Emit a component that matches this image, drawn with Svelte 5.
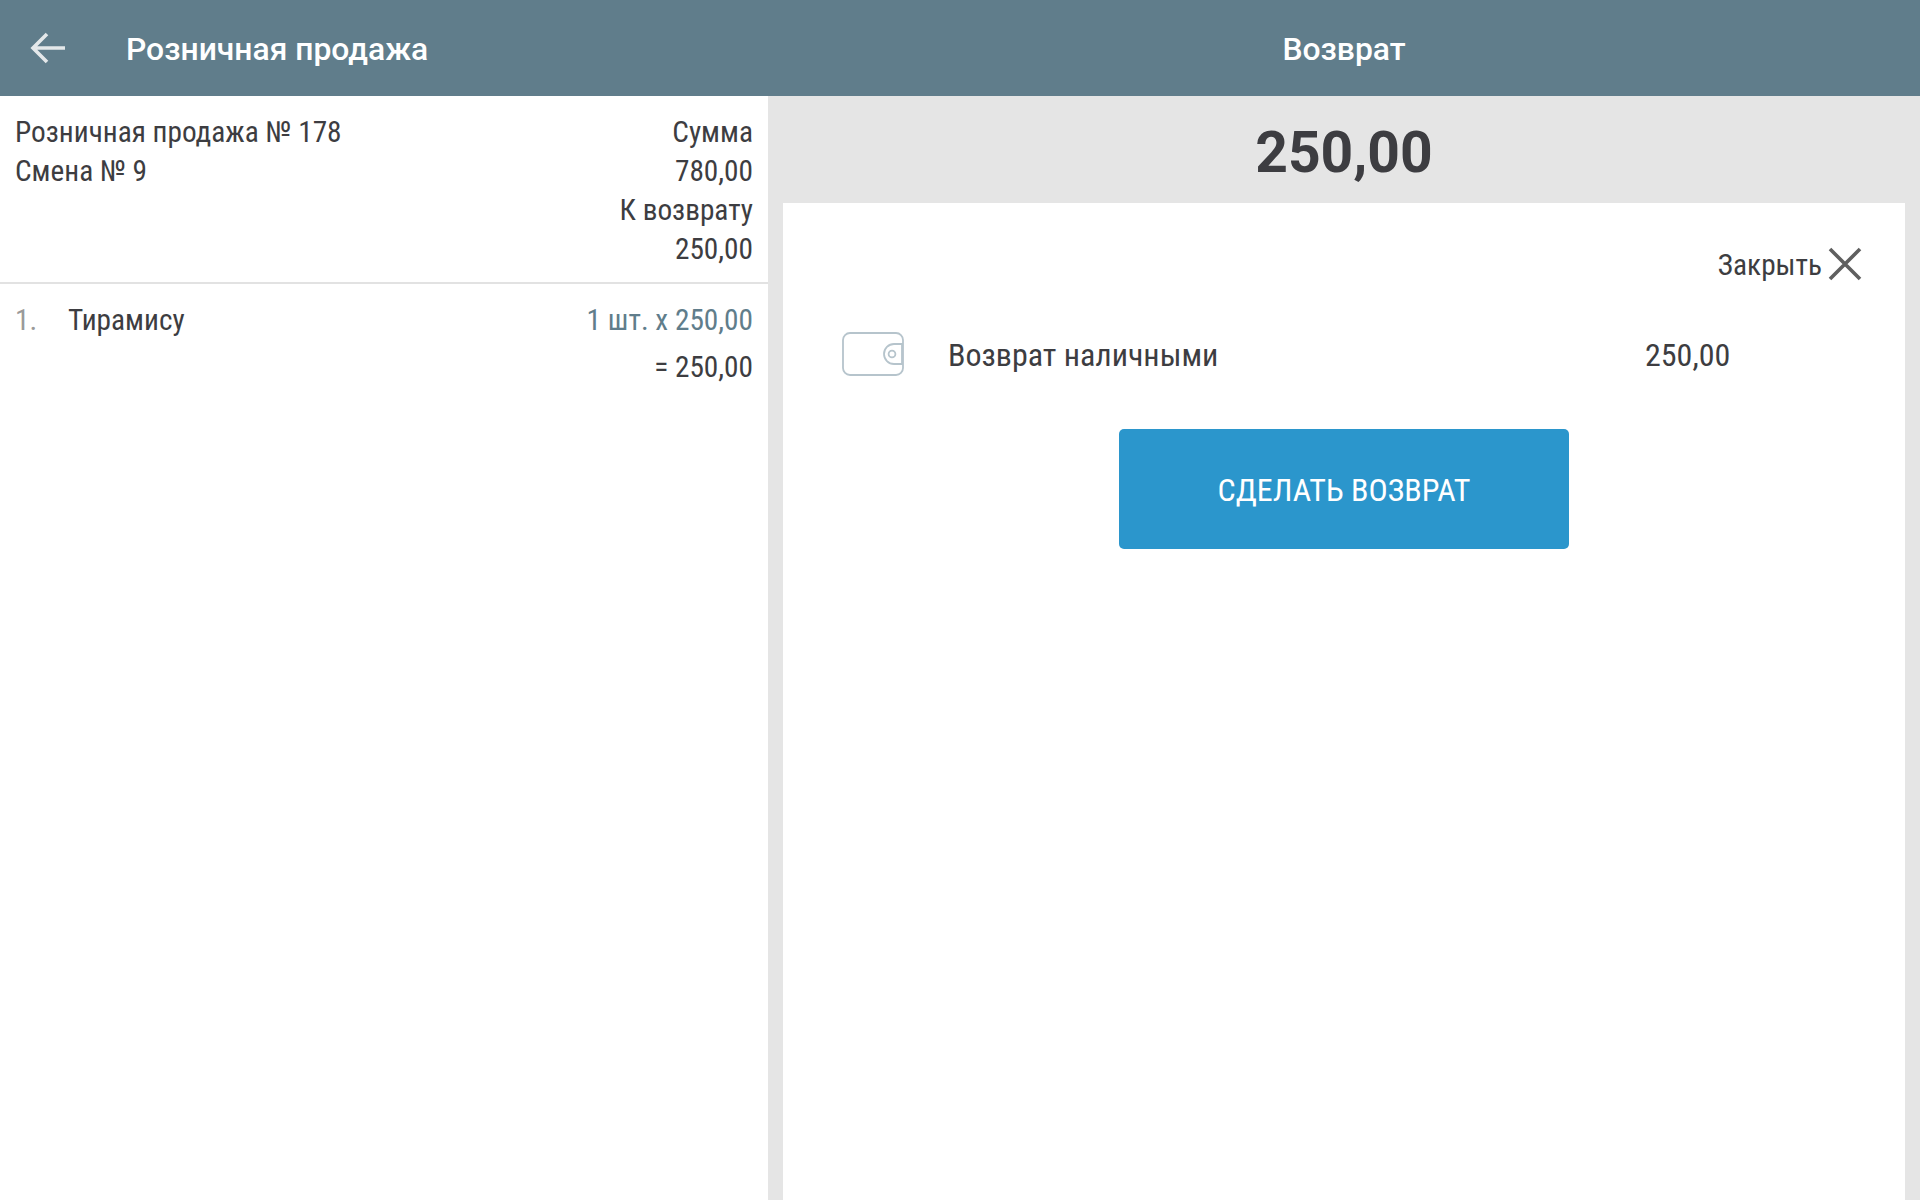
<script>
  const info = ['Сумма', '780,00', 'К возврату', '250,00'];
</script>

<div class="app">
  <header class="bar">
    <div class="bar-left">
      <svg class="back" width="36" height="32" viewBox="0 0 36 32" aria-hidden="true">
        <path d="M35 16H3M17 2 3 16l14 14" fill="none" stroke="#e4e8ea" stroke-width="3.6" />
      </svg>
      <span class="bar-title">Розничная продажа</span>
    </div>
    <div class="bar-right"><span class="bar-title">Возврат</span></div>
  </header>

  <main class="body">
    <section class="left">
      <div class="receipt">
        <div class="receipt-id">
          <div>Розничная продажа № 178</div>
          <div>Смена № 9</div>
        </div>
        <div class="receipt-sum">
          {#each info as line}
            <div>{line}</div>
          {/each}
        </div>
      </div>
      <div class="item">
        <span class="num">1.</span>
        <span class="name">Тирамису</span>
        <div class="prices">
          <div class="qty">1 шт. х 250,00</div>
          <div class="total">= 250,00</div>
        </div>
      </div>
    </section>

    <section class="right">
      <div class="amount">250,00</div>
      <div class="card">
        <div class="close">
          <span class="close-label">Закрыть</span>
          <svg class="close-icon" width="34" height="34" viewBox="0 0 34 34" aria-hidden="true">
            <path d="M2 2 32 32M32 2 2 32" stroke="#5f5f5f" stroke-width="3.6" fill="none" />
          </svg>
        </div>
        <div class="method">
          <svg class="wallet" width="62" height="44" viewBox="0 0 62 44" aria-hidden="true">
            <rect x="1" y="1" width="60" height="42" rx="7" fill="none" stroke="#b6c4cc" stroke-width="1.8" />
            <path d="M60 12H52a10 10 0 0 0 0 20h8z" fill="none" stroke="#b6c4cc" stroke-width="1.8" />
            <circle cx="50" cy="22" r="3.4" fill="none" stroke="#b6c4cc" stroke-width="1.8" />
          </svg>
          <span class="method-name">Возврат наличными</span>
          <span class="method-sum">250,00</span>
        </div>
        <button class="submit">СДЕЛАТЬ ВОЗВРАТ</button>
      </div>
    </section>
  </main>
</div>

<style>
  :global(body) {
    margin: 0;
    background: #fff;
  }
  .app {
    height: 1200px;
    display: flex;
    flex-direction: column;
    font-family: "Roboto Condensed", Roboto, sans-serif;
    font-stretch: 75%;
    font-size: 29.3px;
    line-height: 39px;
    color: #3d3d41;
    overflow: hidden;
  }
  .bar {
    height: 96px;
    flex: none;
    display: flex;
    background: #607d8b;
    color: #fff;
  }
  .bar-left {
    width: 768px;
    display: flex;
    align-items: center;
    padding-left: 30px;
    box-sizing: border-box;
  }
  .back {
    margin-right: 60px;
  }
  .bar-title {
    font-family: Roboto, sans-serif;
    font-stretch: 100%;
    font-weight: 500;
    font-size: 31.85px;
    padding-top: 2px;
  }
  .bar-right {
    flex: 1;
    display: flex;
    align-items: center;
    justify-content: center;
  }
  .body {
    flex: 1;
    display: flex;
    min-height: 0;
  }
  .left {
    width: 768px;
    flex: none;
  }
  .receipt {
    display: flex;
    justify-content: space-between;
    padding: 17px 15px 13px;
    border-bottom: 2px solid #e2e2e2;
  }
  .receipt-sum {
    text-align: right;
  }
  .item {
    display: flex;
    padding: 17px 15px;
  }
  .num {
    width: 53px;
    color: #9a9a9a;
  }
  .name {
    flex: 1;
  }
  .prices {
    text-align: right;
  }
  .qty {
    color: #607d8b;
    margin-bottom: 8px;
  }
  .right {
    flex: 1;
    display: flex;
    flex-direction: column;
    background: #e5e5e5;
  }
  .amount {
    height: 102px;
    padding-top: 5px;
    flex: none;
    display: flex;
    align-items: center;
    justify-content: center;
    font-family: Roboto, sans-serif;
    font-stretch: 100%;
    font-weight: 700;
    font-size: 57px;
  }
  .card {
    flex: 1;
    margin: 0 15px;
    background: #fff;
    display: flex;
    flex-direction: column;
    align-items: center;
  }
  .close {
    align-self: flex-end;
    display: flex;
    align-items: center;
    gap: 6px;
    margin: 41px 43px 0 0;
  }
  .close-label {
    padding-top: 2px;
  }
  .close-icon {
    margin-bottom: 2px;
  }
  .method {
    align-self: stretch;
    display: flex;
    align-items: center;
    margin-top: 47px;
    padding-left: 59px;
    font-size: 32px;
  }
  .wallet {
    margin-bottom: 3px;
  }
  .method-name {
    margin-left: 44px;
    width: 697px;
  }
  .submit {
    width: 450px;
    height: 120px;
    margin-top: 50px;
    padding-top: 3px;
    border: none;
    border-radius: 5px;
    background: #2b96cc;
    color: #fff;
    font: inherit;
    font-stretch: 75%;
    font-size: 32px;
  }
</style>
